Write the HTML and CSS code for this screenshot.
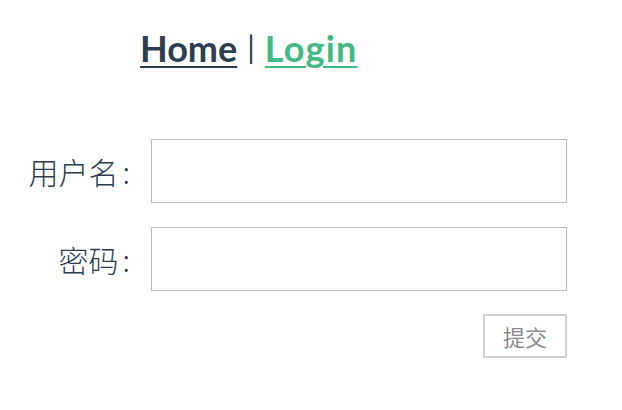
FILE: index.html
```html
<!DOCTYPE html>
<html lang="zh">
<head>
<meta charset="utf-8">
<link rel="stylesheet" href="styles.css">
</head>
<body>
<div class="app">
  <nav class="nav">
    <a class="link" href="#">Home</a><span class="sep">|</span><a class="link active" href="#">Login</a>
  </nav>
  <form class="form">
    <div class="row">
      <label class="label">用户名<span class="colon">:</span></label>
      <input class="input" type="text">
    </div>
    <div class="row">
      <label class="label">密码<span class="colon">:</span></label>
      <input class="input" type="password">
    </div>
    <div class="actions">
      <button class="btn" type="button">提交</button>
    </div>
  </form>
</div>
</body>
</html>
```

FILE: styles.css
```css
html, body {
  margin: 0;
  padding: 0;
  background: #fff;
}
.app {
  font-family: Lato, "Noto Sans CJK SC", sans-serif;
  color: #2c3e50;
}
.nav {
  padding: 24px 0 0 140px;
  font-size: 36px;
  font-weight: bold;
  line-height: 48px;
  height: 48px;
}
.link {
  color: #2c3e50;
  text-decoration: underline;
  text-decoration-thickness: 2px;
  text-underline-offset: 4px;
  letter-spacing: 0;
}
.link.active {
  color: #42b983;
  letter-spacing: 1.2px;
}
.sep {
  font-weight: normal;
  margin: 0 10px 0 10px;
  font-size: 30px;
  position: relative;
  top: -3px;
}
.form {
  margin-top: 67px;
  width: 567px;
}
.row {
  display: flex;
  align-items: center;
  margin-bottom: 24px;
}
.label {
  width: 151px;
  flex: none;
  text-align: right;
  padding-right: 21px;
  box-sizing: border-box;
  font-family: "Noto Sans CJK SC", sans-serif;
  font-size: 30px;
  font-weight: 300;
  color: #2c3e50;
}
.colon {
  margin-left: 4px;
}
.input {
  flex: 1;
  height: 64px;
  box-sizing: border-box;
  border: 1px solid #bdbdbd;
  margin: 0;
  padding: 0 8px;
  font-size: 24px;
  outline: none;
}
.actions {
  display: flex;
  justify-content: flex-end;
  margin-top: -1px;
}
.btn {
  width: 84px;
  height: 44px;
  box-sizing: border-box;
  background: #fff;
  border: 2px solid #d0d0d0;
  color: #8a8a8a;
  font-family: "Noto Sans CJK SC", sans-serif;
  font-size: 22px;
  padding: 0;
}
```
